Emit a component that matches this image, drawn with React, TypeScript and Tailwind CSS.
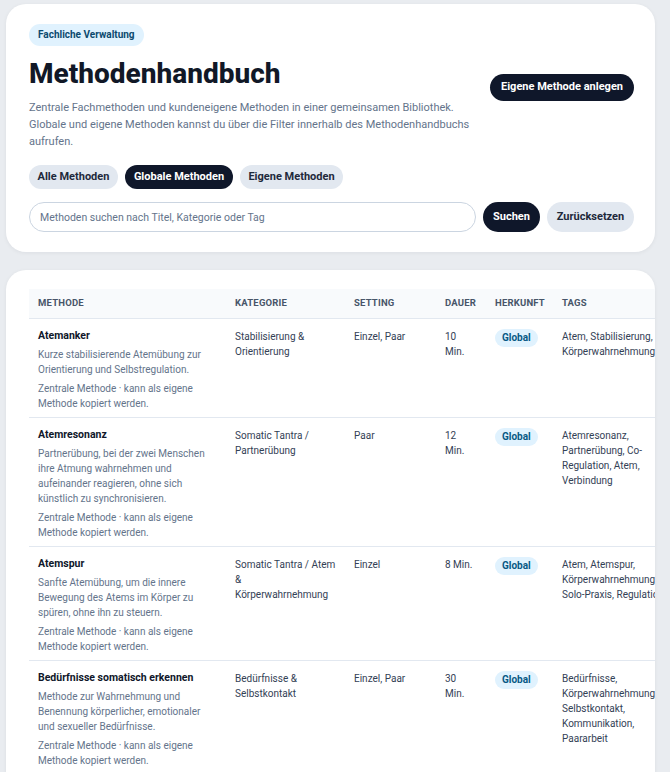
import React from "react";

type Row = {
  title: string;
  desc: string;
  kategorie: string;
  setting: string;
  dauer: string;
  tags: string;
};

const rows: Row[] = [
  {
    title: "Atemanker",
    desc: "Kurze stabilisierende Atemübung zur Orientierung und Selbstregulation.",
    kategorie: "Stabilisierung & Orientierung",
    setting: "Einzel, Paar",
    dauer: "10 Min.",
    tags: "Atem, Stabilisierung, Körperwahrnehmung",
  },
  {
    title: "Atemresonanz",
    desc: "Partnerübung, bei der zwei Menschen ihre Atmung wahrnehmen und aufeinander reagieren, ohne sich künstlich zu synchronisieren.",
    kategorie: "Somatic Tantra / Partnerübung",
    setting: "Paar",
    dauer: "12 Min.",
    tags: "Atemresonanz, Partnerübung, Co-Regulation, Atem, Verbindung",
  },
  {
    title: "Atemspur",
    desc: "Sanfte Atemübung, um die innere Bewegung des Atems im Körper zu spüren, ohne ihn zu steuern.",
    kategorie: "Somatic Tantra / Atem &\nKörperwahrnehmung",
    setting: "Einzel",
    dauer: "8 Min.",
    tags: "Atem, Atemspur, Körperwahrnehmung, Solo-Praxis, Regulation",
  },
  {
    title: "Bedürfnisse somatisch erkennen",
    desc: "Methode zur Wahrnehmung und Benennung körperlicher, emotionaler und sexueller Bedürfnisse.",
    kategorie: "Bedürfnisse & Selbstkontakt",
    setting: "Einzel, Paar",
    dauer: "30 Min.",
    tags: "Bedürfnisse, Körperwahrnehmung, Selbstkontakt, Kommunikation, Paararbeit",
  },
];

export default function App() {
  return (
    <div className="min-h-[772px] bg-[#e9ecf0] pl-[6px] pr-[15px] pt-[4px] pb-4 font-['Roboto','Noto_Sans',sans-serif] leading-normal">
      {/* Header card */}
      <div className="rounded-[20px] bg-white pl-[23px] pr-[21px] pt-[20px] pb-[20px] shadow-[0_1px_4px_rgba(15,23,42,0.06)]">
        <div className="flex items-center justify-between">
          <div className="flex flex-col items-start">
            <span className="flex h-[22px] items-center rounded-full bg-[#e0f2fe] px-[9px] text-[10px] font-bold leading-none text-[#0c4a6e]">
              Fachliche Verwaltung
            </span>
            <h1 className="mt-[12px] text-[28px] font-extrabold leading-[32px] text-[#111827]">
              Methodenhandbuch
            </h1>
            <p className="mt-[9px] max-w-[455px] text-[11px] leading-[17px] text-[#64748b]">
              Zentrale Fachmethoden und kundeneigene Methoden in einer gemeinsamen Bibliothek.
              Globale und eigene Methoden kannst du über die Filter innerhalb des Methodenhandbuchs
              aufrufen.
            </p>
          </div>
          <button className="h-[27px] w-[144px] rounded-full bg-[#0f172a] text-[11px] font-bold text-white">
            Eigene Methode anlegen
          </button>
        </div>

        <div className="mt-[15px] flex gap-[7px]">
          <button className="h-[24px] w-[89px] rounded-full bg-[#e2e8f0] text-[11px] font-bold text-[#1e293b]">
            Alle Methoden
          </button>
          <button className="h-[24px] w-[108px] rounded-full bg-[#0f172a] text-[11px] font-bold text-white">
            Globale Methoden
          </button>
          <button className="h-[24px] w-[103px] rounded-full bg-[#e2e8f0] text-[11px] font-bold text-[#1e293b]">
            Eigene Methoden
          </button>
        </div>

        <div className="mt-[13px] flex gap-[7px]">
          <input
            className="h-[30px] min-w-0 flex-1 rounded-full border border-[#cbd5e1] bg-white px-[10px] text-[10.5px] text-[#0f172a] outline-none placeholder:text-[#64748b]"
            placeholder="Methoden suchen nach Titel, Kategorie oder Tag"
          />
          <button className="h-[30px] w-[57px] rounded-full bg-[#0f172a] text-[11px] font-bold text-white">
            Suchen
          </button>
          <button className="h-[30px] w-[87px] rounded-full bg-[#e2e8f0] text-[11px] font-bold text-[#1e293b]">
            Zurücksetzen
          </button>
        </div>
      </div>

      {/* Table card */}
      <div className="mt-[18px] overflow-hidden rounded-t-[20px] bg-white pl-[23px] pt-[19px] shadow-[0_1px_4px_rgba(15,23,42,0.06)]">
        <table className="w-[660px] table-fixed border-collapse text-left">
          <colgroup>
            <col className="w-[197px]" />
            <col className="w-[119px]" />
            <col className="w-[91px]" />
            <col className="w-[50px]" />
            <col className="w-[67px]" />
            <col className="w-[136px]" />
          </colgroup>
          <thead>
            <tr className="h-[29px] border-b border-[#e2e8f0] bg-[#f8fafc]">
              {["Methode", "Kategorie", "Setting", "Dauer", "Herkunft", "Tags"].map((h) => (
                <th
                  key={h}
                  className="px-[9px] align-middle text-[9.5px] font-bold uppercase tracking-[0.2px] text-[#475569]"
                >
                  {h}
                </th>
              ))}
            </tr>
          </thead>
          <tbody>
            {rows.map((r) => (
              <tr key={r.title} className="border-b border-[#e2e8f0] align-top">
                <td className="pl-[9px] pr-[18px] pt-[9px] pb-[6px]">
                  <div className="text-[10.5px] font-bold leading-[16px] text-[#0f172a]">{r.title}</div>
                  <div className="mt-[3px] text-[10px] leading-[15px] text-[#64748b]">{r.desc}</div>
                  <div className="mt-[4px] text-[10px] leading-[15px] text-[#64748b]">
                    Zentrale Methode · kann als eigene Methode kopiert werden.
                  </div>
                </td>
                <td className="whitespace-pre-line pl-[9px] pr-[7px] pt-[10px] text-[10px] leading-[15px] text-[#334155]">
                  {r.kategorie}
                </td>
                <td className="px-[9px] pt-[10px] text-[10px] leading-[15px] text-[#334155]">{r.setting}</td>
                <td className="pl-[9px] pr-[8px] pt-[10px] text-[10px] leading-[15px] text-[#334155]">{r.dauer}</td>
                <td className="px-[9px] pt-[10px]">
                  <div className="flex">
                    <span className="flex h-[18px] items-center rounded-full bg-[#e0f2fe] px-[7px] text-[10px] font-bold leading-none text-[#075985]">
                      Global
                    </span>
                  </div>
                </td>
                <td className="pl-[9px] pr-[15px] pt-[10px] text-[10px] leading-[15px] text-[#334155]">{r.tags}</td>
              </tr>
            ))}
          </tbody>
        </table>
      </div>
    </div>
  );
}
